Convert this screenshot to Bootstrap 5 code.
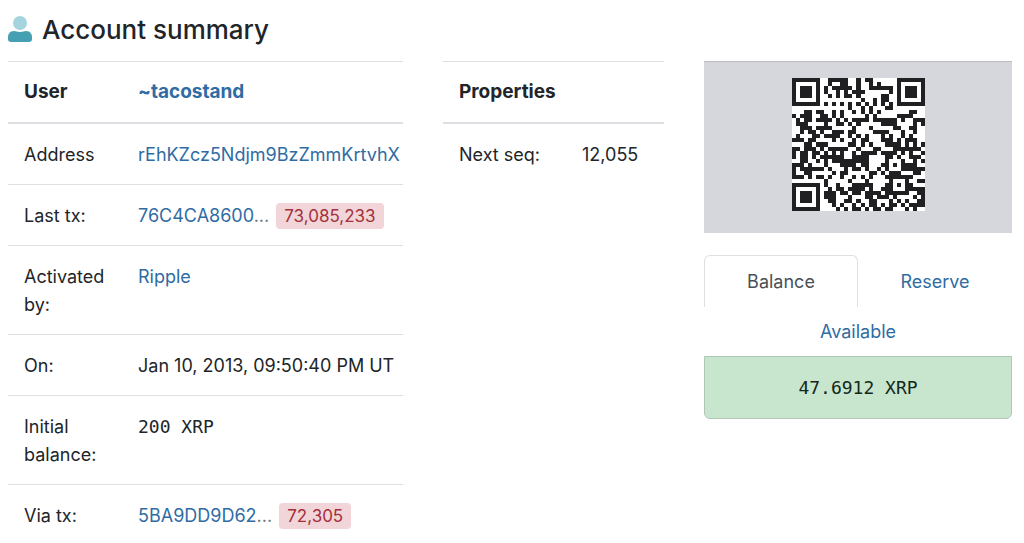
<!DOCTYPE html>
<html lang="en">
<head>
<meta charset="utf-8">
<meta name="viewport" content="width=device-width, initial-scale=1">
<title>Account summary</title>
<link rel="stylesheet" href="https://cdn.jsdelivr.net/npm/bootstrap@5.3.0/dist/css/bootstrap.min.css">
<style>
  :root { --line: #dddfe2; --link: #2f6ca3; }
  body { font-family: Inter, "Liberation Sans", sans-serif; font-size: 18px; line-height: 28px; color: #212529; }
  a { color: var(--link); text-decoration: none; }
  .page { padding: 12px 12px 0 8px; }
  .page-title { font-size: 26px; line-height: 36px; margin-bottom: 13px; }
  .summary { --bs-gutter-x: 40px; }
  .facts { width: 100%; table-layout: fixed; border-collapse: separate; border-spacing: 0; }
  .facts th, .facts td { padding: 17px 0 15px 16px; vertical-align: top; border-top: 1px solid var(--line); }
  .facts td { white-space: nowrap; overflow: hidden; }
  .facts thead th { font-size: 19px; padding: 16px 0 16px 16px; border-bottom: 2px solid var(--line); }
  .facts tbody th { font-weight: 400; }
  .facts tbody tr:first-child > * { border-top: 0; }
  .label-col { width: 114px; }
  .prop-col { width: 123px; }
  .facts .ledger { display: inline-block; font-size: 17px; line-height: 26px; padding: 0 8px; margin-left: 2px; border-radius: 4px; background: #f1d5d8; color: #a4303b; }
  .xrp { font-family: "DejaVu Sans Mono", monospace; }
  .qr-panel { background: #d6d7dc; border-top: 1px solid #bcbec3; padding: 16px 0 22px; margin-bottom: 22px; }
  .qr-panel svg { width: 133px; height: 133px; display: block; }
  .balance-tabs { --bs-nav-tabs-border-radius: 6px; border-bottom: 0; --bs-nav-link-color: var(--link); }
  .balance-tabs .nav-link { padding: 12px 0 11px; }
  .balance-tabs .nav-link.active { border-bottom: 0; color: #495057; border-color: var(--line); }
  .available { padding: 11px 0 10px; }
  .amount { padding: 17px 16px 16px; background: #c8e5ce; border: 1px solid #b1c6b8; border-radius: 0 0 6px 6px; color: #12291a; }
</style>
</head>
<body>
<main class="page">
  <h1 class="page-title d-flex align-items-center gap-2 fw-medium">
    <svg width="26" height="30" viewBox="0 0 26 30" aria-hidden="true">
      <circle cx="12" cy="8" r="7" fill="#a5d4df"/>
      <path d="M6 16C2 16 0 19 0 22v2q0 3 3 3h18q3 0 3-3v-2c0-3-2-6-6-6-2 0-3 1-6 1s-4-1-6-1z" fill="#45a0b1"/>
    </svg>
    <span>Account summary</span>
  </h1>
  <div class="row summary">
    <div class="col-5">
      <table class="facts">
        <colgroup><col class="label-col"><col></colgroup>
        <thead>
          <tr><th scope="col">User</th><th scope="col"><a href="#user">~tacostand</a></th></tr>
        </thead>
        <tbody>
          <tr><th scope="row">Address</th><td><a href="#rEhKZcz5Ndjm9BzZmmKrtvhXPnSWByssDv">rEhKZcz5Ndjm9BzZmmKrtvhX</a></td></tr>
          <tr><th scope="row">Last tx:</th><td><a href="#last-tx">76C4CA8600</a><span class="text-secondary">...</span> <a class="ledger" href="#ledger-last">73,085,233</a></td></tr>
          <tr><th scope="row">Activated by:</th><td><a href="#ripple">Ripple</a></td></tr>
          <tr><th scope="row">On:</th><td>Jan 10, 2013, 09:50:40 PM UT</td></tr>
          <tr><th scope="row">Initial balance:</th><td class="xrp">200 XRP</td></tr>
          <tr><th scope="row">Via tx:</th><td><a href="#via-tx">5BA9DD9D62</a><span class="text-secondary">...</span> <a class="ledger" href="#ledger-via">72,305</a></td></tr>
        </tbody>
      </table>
    </div>
    <div class="col-3">
      <table class="facts">
        <colgroup><col class="prop-col"><col></colgroup>
        <thead><tr><th scope="col" colspan="2">Properties</th></tr></thead>
        <tbody><tr><th scope="row">Next seq:</th><td>12,055</td></tr></tbody>
      </table>
    </div>
    <div class="col-4">
      <div class="qr-panel d-flex justify-content-center">
        <svg viewBox="0 0 33 33" shape-rendering="crispEdges" role="img" aria-label="Account address QR code">
          <rect width="33" height="33" fill="#fff"/>
          <path id="qr" fill="#202022"/>
        </svg>
      </div>
      <ul class="nav nav-tabs nav-fill balance-tabs">
        <li class="nav-item w-50"><a class="nav-link active" aria-current="page" href="#balance">Balance</a></li>
        <li class="nav-item w-50"><a class="nav-link" href="#reserve">Reserve</a></li>
      </ul>
      <div class="available text-center"><a href="#available">Available</a></div>
      <div class="amount xrp text-center">47.6912 XRP</div>
    </div>
  </div>
</main>
<script src="https://cdn.jsdelivr.net/npm/bootstrap@5.3.0/dist/js/bootstrap.bundle.min.js"></script>
<script>
// QR code, version 4, error correction H (4 blocks of 9 data + 16 check codewords), mask 6
function qrPath(text) {
  const N = 33, MASK_FORMAT = "000110100001100";
  let bits = "0100" + text.length.toString(2).padStart(8, "0");
  for (const c of text) bits += c.charCodeAt(0).toString(2).padStart(8, "0");
  bits += "0000";
  const data = bits.match(/.{8}/g).map(b => parseInt(b, 2));

  const exp = [], log = [];
  for (let i = 0, x = 1; i < 255; i++) { exp[i] = x; log[x] = i; x <<= 1; if (x > 255) x ^= 0x11d; }
  const mul = (a, b) => a && b ? exp[(log[a] + log[b]) % 255] : 0;
  let gen = [1];
  for (let i = 0; i < 16; i++) {
    const next = gen.concat(0);
    gen.forEach((g, j) => next[j + 1] ^= mul(g, exp[i]));
    gen = next;
  }
  const blocks = [0, 1, 2, 3].map(b => data.slice(b * 9, b * 9 + 9));
  const checks = blocks.map(b => {
    const rem = b.concat(Array(16).fill(0));
    for (let i = 0; i < 9; i++) {
      const f = rem[i];
      gen.forEach((g, j) => rem[i + j] ^= mul(g, f));
    }
    return rem.slice(9);
  });
  let stream = "";
  for (const [set, len] of [[blocks, 9], [checks, 16]])
    for (let i = 0; i < len; i++)
      for (const b of set) stream += b[i].toString(2).padStart(8, "0");

  const m = Array.from({ length: N }, () => Array(N).fill(null));
  const put = (r, c, v) => { if (r >= 0 && c >= 0 && r < N && c < N) m[r][c] = v ? 1 : 0; };
  for (const [r, c] of [[3, 3], [3, N - 4], [N - 4, 3]])
    for (let y = -4; y <= 4; y++) for (let x = -4; x <= 4; x++) {
      const d = Math.max(Math.abs(x), Math.abs(y));
      put(r + y, c + x, d !== 2 && d !== 4);
    }
  for (let i = 8; i < N - 8; i++) { put(6, i, i % 2 === 0); put(i, 6, i % 2 === 0); }
  for (let y = -2; y <= 2; y++) for (let x = -2; x <= 2; x++)
    put(26 + y, 26 + x, Math.max(Math.abs(x), Math.abs(y)) !== 1);
  const f = [...MASK_FORMAT].reverse().map(Number);
  for (let i = 0; i < 15; i++) {
    const v = f[i];
    if (i < 6) put(i, 8, v); else if (i < 8) put(i + 1, 8, v); else if (i === 8) put(8, 7, v); else put(8, 14 - i, v);
    if (i < 8) put(8, N - 1 - i, v); else put(N - 15 + i, 8, v);
  }
  put(N - 8, 8, 1);

  let k = 0, up = true;
  for (let col = N - 1; col > 0; col -= 2) {
    if (col === 6) col--;
    for (let n = 0; n < N; n++) {
      const r = up ? N - 1 - n : n;
      for (const c of [col, col - 1]) {
        if (m[r][c] !== null) continue;
        const flip = ((r * c) % 2 + (r * c) % 3) % 2 === 0;
        m[r][c] = (stream[k++] === "1" ? 1 : 0) ^ (flip ? 1 : 0);
      }
    }
    up = !up;
  }
  let d = "";
  m.forEach((row, y) => row.forEach((v, x) => { if (v) d += `M${x} ${y}h1v1h-1z`; }));
  return d;
}
document.getElementById("qr").setAttribute("d", qrPath("rEhKZcz5Ndjm9BzZmmKrtvhXPnSWByssDv"));
</script>
</body>
</html>
